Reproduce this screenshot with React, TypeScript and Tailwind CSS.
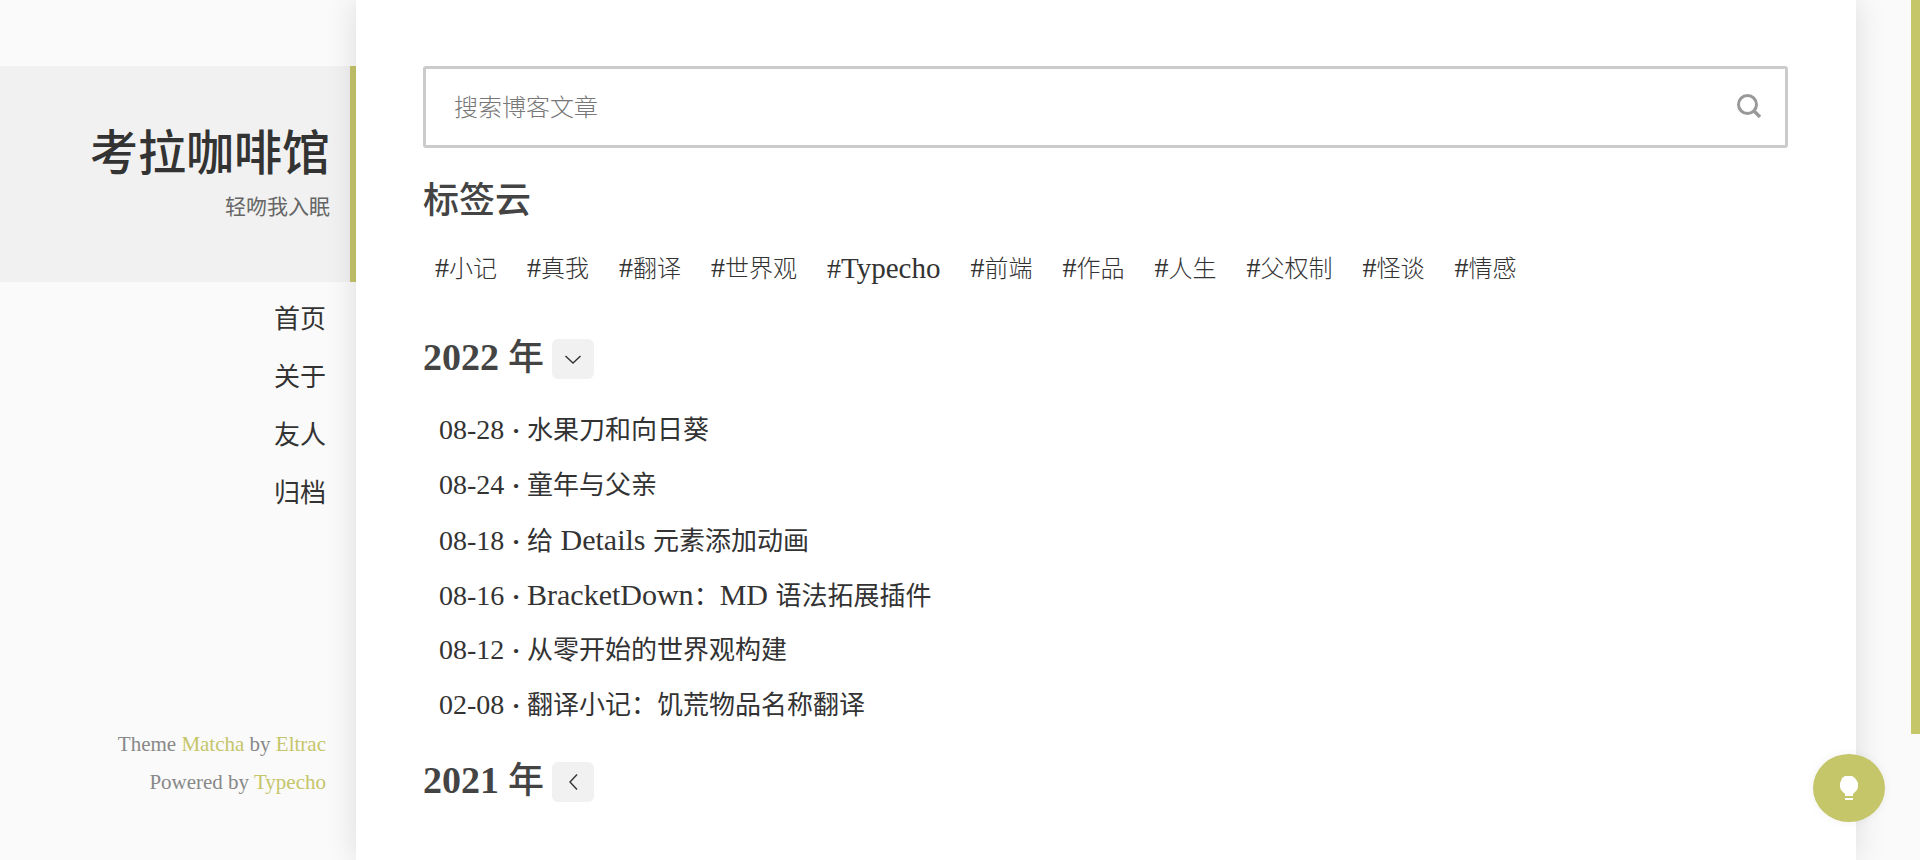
import { useState } from "react";

type Post = {
  date: string;
  title: string;
};

type YearGroup = {
  year: number;
  posts: Post[];
  defaultOpen: boolean;
};

const NAV_ITEMS = ["首页", "关于", "友人", "归档"];

const TAGS = [
  "小记",
  "真我",
  "翻译",
  "世界观",
  "Typecho",
  "前端",
  "作品",
  "人生",
  "父权制",
  "怪谈",
  "情感",
];

const ARCHIVE: YearGroup[] = [
  {
    year: 2022,
    defaultOpen: true,
    posts: [
      { date: "08-28", title: "水果刀和向日葵" },
      { date: "08-24", title: "童年与父亲" },
      { date: "08-18", title: "给 Details 元素添加动画" },
      { date: "08-16", title: "BracketDown：MD 语法拓展插件" },
      { date: "08-12", title: "从零开始的世界观构建" },
      { date: "02-08", title: "翻译小记：饥荒物品名称翻译" },
    ],
  },
  { year: 2021, defaultOpen: false, posts: [] },
];

const SCROLL_PROGRESS = 734 / 860;

// Latin words are set a little larger so that they sit level with the Chinese text
const MixedText = ({ text }: { text: string }) => (
  <>
    {text.split(/( ?[A-Za-z]+ ?)/).map((part, index) =>
      /[A-Za-z]/.test(part) ? (
        <span key={index} className="text-[30px]">
          {part}
        </span>
      ) : (
        part
      )
    )}
  </>
);

const Sidebar = () => (
  <aside className="sticky top-0 flex h-screen w-[356px] shrink-0 flex-col pt-[66px] text-right">
    <header className="flex h-54 shrink-0 flex-col justify-center border-r-6 border-[#c5c56a] bg-[#f1f1f1] pr-5 pb-0.5">
      <h1 className="text-[48px] leading-[68px] font-medium text-[#333]">
        <a href="#">考拉咖啡馆</a>
      </h1>
      <p className="text-[21px] leading-[38px] text-[#666]">轻吻我入眠</p>
    </header>
    <nav className="mt-[9px] flex flex-col pr-[30px]">
      {NAV_ITEMS.map((item) => (
        <a
          key={item}
          href="#"
          className="text-[26px] leading-[58px] text-[#333] hover:text-[#c5c56a]"
        >
          {item}
        </a>
      ))}
    </nav>
    <footer className="mt-auto pr-[30px] pb-[59px] text-[21px] leading-[38px] text-[#888]">
      <p>
        Theme{" "}
        <a href="#" className="text-[#c5c56a]">
          Matcha
        </a>{" "}
        by{" "}
        <a href="#" className="text-[#c5c56a]">
          Eltrac
        </a>
      </p>
      <p>
        Powered by{" "}
        <a href="#" className="text-[#c5c56a]">
          Typecho
        </a>
      </p>
    </footer>
  </aside>
);

const SearchBox = () => (
  <form
    role="search"
    onSubmit={(event) => event.preventDefault()}
    className="flex h-[82px] items-center rounded-[3px] border-3 border-[#cbcbcb] pr-6 pl-7"
  >
    <input
      type="text"
      aria-label="搜索博客文章"
      placeholder="搜索博客文章"
      className="h-full min-w-0 flex-1 pt-0.5 text-[24px] font-light text-[#333] outline-none placeholder:text-[#777]"
    />
    <button type="submit" aria-label="搜索" className="pb-0.5 text-[#999]">
      <svg width="24" height="24" viewBox="0 0 24 24" fill="none" stroke="currentColor" strokeWidth="3">
        <circle cx="10.5" cy="10.5" r="9" />
        <path d="M16.5 16.5 L23 23" strokeWidth="3.4" />
      </svg>
    </button>
  </form>
);

const YearSection = ({ group }: { group: YearGroup }) => {
  const [isOpen, setIsOpen] = useState(group.defaultOpen);

  return (
    <section>
      <div className="flex h-[52px] items-center gap-2">
        <h2 className="self-start text-[36px] leading-12 font-medium text-[#444]">
          <span className="text-[38px] font-bold">{group.year}</span> 年
        </h2>
        <button
          type="button"
          aria-label={`${group.year} 年`}
          aria-expanded={isOpen}
          onClick={() => setIsOpen(!isOpen)}
          className="flex h-10 w-[42px] items-center justify-center rounded-md bg-[#f1f1f1] text-[#333]"
        >
          <svg width="18" height="18" viewBox="0 0 18 18" fill="none" stroke="currentColor" strokeWidth="1.4">
            {isOpen ? <path d="M1.5 6 L9 13 L16.5 6" /> : <path d="M13 1.5 L6 9 L13 16.5" />}
          </svg>
        </button>
      </div>
      {isOpen ? (
        <ul className="mt-[17px] mb-6 pl-4">
          {group.posts.map((post) => (
            <li key={post.date} className="h-[55px] text-[26px] leading-[55px] text-[#333]">
              <a href="#" className="flex items-baseline hover:text-[#c5c56a]">
                <time className="w-[66px] text-[28px]">{post.date}</time>
                <span className="w-[22px] text-center font-bold">·</span>
                <span>
                  <MixedText text={post.title} />
                </span>
              </a>
            </li>
          ))}
        </ul>
      ) : null}
    </section>
  );
};

export default function App() {
  return (
    <div className="flex min-h-screen bg-[#fafafa] font-['Liberation_Serif','Noto_Sans_CJK_SC',serif]">
      <Sidebar />
      <main className="relative mr-16 min-w-0 flex-1 bg-white pt-[66px] pr-[68px] pb-10 pl-[67px] shadow-[0_0_30px_rgba(0,0,0,0.12)]">
        <SearchBox />
        <h2 className="mt-[27px] text-[36px] leading-[52px] font-medium text-[#444]">标签云</h2>
        <ul className="mt-5 mb-[43px] flex flex-wrap gap-x-[30px] pl-3">
          {TAGS.map((tag) => (
            <li key={tag} className="leading-[42px] text-[#333]">
              <a href="#" className="flex items-baseline hover:text-[#c5c56a]">
                <span className="text-[28px]">#</span>
                <span
                  className={
                    /[A-Za-z]/.test(tag) ? "text-[29px]" : "text-[24px] font-light"
                  }
                >
                  {tag}
                </span>
              </a>
            </li>
          ))}
        </ul>
        {ARCHIVE.map((group) => (
          <YearSection key={group.year} group={group} />
        ))}
      </main>
      <div
        className="fixed top-0 right-0 w-[9px] bg-[#c5c56a]"
        style={{ height: `${SCROLL_PROGRESS * 100}%` }}
      />
      <button
        type="button"
        aria-label="切换主题"
        className="fixed right-[35px] bottom-[38px] flex h-[68px] w-[72px] items-center justify-center rounded-[50%] bg-[#c5c56a] text-white shadow-[0_0_10px_rgba(0,0,0,0.06)]"
      >
        <svg width="20" height="24" viewBox="0 0 20 24" fill="currentColor">
          <path d="M6 0 H13 L16 2 L18 5 L19 7 V11 L18 14 L14 18 V20 H6 V18 L2 14 L1 11 V7 L2 5 L3 2 Z" />
          <path d="M6 22 H14 V24 H6 Z" />
        </svg>
      </button>
    </div>
  );
}
